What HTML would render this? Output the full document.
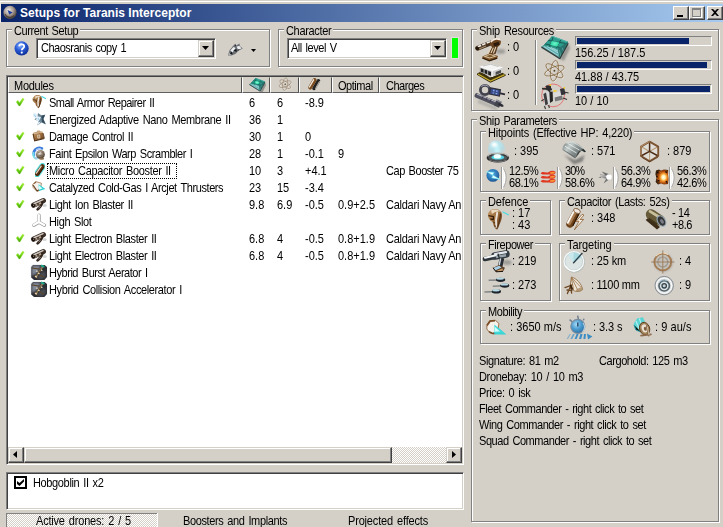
<!DOCTYPE html>
<html><head><meta charset="utf-8"><title>Setups for Taranis Interceptor</title>
<style>
html,body{margin:0;padding:0;}
body{width:723px;height:527px;overflow:hidden;background:#d4d0c8;position:relative;font-family:"Liberation Sans",sans-serif;font-size:11px;color:#000;}
div,svg{position:absolute;box-sizing:content-box;}
.t{white-space:nowrap;line-height:14px;height:14px;font-size:11px;transform:scaleY(1.13);transform-origin:0 10.8px;}
.gb{border:1px solid #808080;box-shadow:1px 1px 0 #fff, inset 1px 1px 0 #fff;}
.gl{background:#d4d0c8;padding:0 2px;line-height:14px;height:14px;white-space:nowrap;}
.gl span{display:inline-block;position:static;transform:scaleY(1.13);transform-origin:0 10.8px;}
.sunk{border:1px solid;border-color:#808080 #fff #fff #808080;box-shadow:inset 1px 1px 0 #404040, inset -1px -1px 0 #d4d0c8;background:#fff;}
.btn{background:#d4d0c8;border:1px solid;border-color:#fff #404040 #404040 #fff;box-shadow:inset -1px -1px 0 #808080, inset 1px 1px 0 #d4d0c8;}
.btn2{background:#d4d0c8;border:1px solid;border-color:#d4d0c8 #404040 #404040 #d4d0c8;box-shadow:inset -1px -1px 0 #808080, inset 1px 1px 0 #fff;}
.hd{background:#d4d0c8;border:1px solid;border-color:#d4d0c8 #505050 #606060 #fff;top:77px;height:14px;}
.dither{background-image:conic-gradient(#fff 25%,#d4d0c8 0 50%,#fff 0 75%,#d4d0c8 0);background-size:2px 2px;}
.pb{border:1px solid;border-color:#808080 #fff #fff #808080;height:8px;}
.pf{background:#0a246a;left:1px;top:1px;height:6px;}
.rb{width:1px;background:#808080;box-shadow:1px 0 0 #fff, 2px 0 0 #b8b4ac;}
</style></head><body>

<svg width="0" height="0" style="left:0;top:0"><defs>
<filter id="b3" x="-30%" y="-30%" width="160%" height="160%"><feGaussianBlur stdDeviation=".3"/></filter>
<filter id="b5" x="-30%" y="-30%" width="160%" height="160%"><feGaussianBlur stdDeviation=".5"/></filter>
<filter id="b8" x="-40%" y="-40%" width="180%" height="180%"><feGaussianBlur stdDeviation=".8"/></filter>
<filter id="b12" x="-50%" y="-50%" width="200%" height="200%"><feGaussianBlur stdDeviation="1.3"/></filter>
<linearGradient id="gchk" x1="0" y1="0" x2="0" y2="1"><stop offset="0" stop-color="#a4ee30"/><stop offset=".55" stop-color="#6cd014"/><stop offset="1" stop-color="#3e9a0c"/></linearGradient>
<linearGradient id="gbrown" x1="0" y1="0" x2="1" y2="1"><stop offset="0" stop-color="#c8a070"/><stop offset=".5" stop-color="#9a6a3a"/><stop offset="1" stop-color="#5a3414"/></linearGradient>
<linearGradient id="gmetal" x1="0" y1="0" x2="1" y2=".6"><stop offset="0" stop-color="#6a7272"/><stop offset=".35" stop-color="#c4cccc"/><stop offset=".6" stop-color="#8a9292"/><stop offset="1" stop-color="#5a6262"/></linearGradient>
<radialGradient id="ghelp" cx=".4" cy=".3" r=".75"><stop offset="0" stop-color="#8ab4ff"/><stop offset=".45" stop-color="#2a5cd8"/><stop offset="1" stop-color="#0a2a90"/></radialGradient>
<radialGradient id="gshield" cx=".42" cy=".3" r=".7"><stop offset="0" stop-color="#ffffff"/><stop offset=".25" stop-color="#b4ecf8"/><stop offset=".7" stop-color="#a8dcec" stop-opacity=".75"/><stop offset="1" stop-color="#a8dcec" stop-opacity="0"/></radialGradient>
<radialGradient id="gex" cx=".62" cy=".52" r=".6"><stop offset="0" stop-color="#ffffff"/><stop offset=".22" stop-color="#fff0b0"/><stop offset=".4" stop-color="#f8a030"/><stop offset=".65" stop-color="#b04c10"/><stop offset="1" stop-color="#38200c"/></radialGradient>
<radialGradient id="gem" cx=".45" cy=".4" r=".65"><stop offset="0" stop-color="#58a8e0"/><stop offset=".6" stop-color="#2c78b8"/><stop offset="1" stop-color="#1c4c88"/></radialGradient>
<radialGradient id="gsph" cx=".4" cy=".35" r=".7"><stop offset="0" stop-color="#f4f0ec"/><stop offset=".45" stop-color="#9a8c7c"/><stop offset="1" stop-color="#3a2c20"/></radialGradient>
<radialGradient id="galign" cx=".4" cy=".35" r=".7"><stop offset="0" stop-color="#a8dcf8"/><stop offset=".5" stop-color="#4c9cd0"/><stop offset="1" stop-color="#2c6ca0"/></radialGradient>
<radialGradient id="gtitle" cx=".4" cy=".35" r=".7"><stop offset="0" stop-color="#f0ece8"/><stop offset=".5" stop-color="#a89c94"/><stop offset="1" stop-color="#40362e"/></radialGradient>
</defs></svg>
<div style="left:0;top:0;width:723px;height:1px;background:#d4d0c8"></div>
<div style="left:0;top:1px;width:723px;height:1px;background:#fff"></div>
<div style="left:0;top:2px;width:1px;height:21px;background:#ebe9e2"></div>
<div style="left:1px;top:4px;width:722px;height:18px;background:linear-gradient(90deg,#0a246a,#a6caf0)"></div>
<svg style="left:3px;top:5px;overflow:visible" width="15" height="15" viewBox="0 0 15 15" ><circle cx="7" cy="7.4" r="6.6" fill="url(#gtitle)"/><path d="M4.6 5 L9.6 7.4 L6.2 9.6Z" fill="#1c3c9c"/><path d="M2 9 A5.4 5.4 0 0 0 11 10.6" stroke="#2c241c" stroke-width="1.2" fill="none" opacity=".6"/></svg>
<div class="t" style="-webkit-text-stroke:0;transform:none;left:20px;top:6px;color:#fff;font-weight:bold;font-size:12px;letter-spacing:0.03px" id="title">Setups for Taranis Interceptor</div>
<div class="btn" style="left:673px;top:6px;width:14px;height:12px"><div style="left:3px;top:8px;width:6px;height:2px;background:#000"></div></div>
<div class="btn" style="left:689px;top:6px;width:14px;height:12px"><div style="left:2px;top:1px;width:7px;height:6px;border:1px solid #808080;border-top-width:2px;box-shadow:1px 1px 0 #fff"></div></div>
<div class="btn" style="left:707px;top:6px;width:14px;height:12px"><svg style="left:3px;top:2px" width="8" height="7" viewBox="0 0 8 7"><path d="M0 0h2l2 2 2-2h2L5 3.5 8 7H6L4 5 2 7H0l3-3.5z" fill="#000"/></svg></div>
<div class="gb" style="left:6px;top:29px;width:262px;height:36px"></div><div class="gl" style="left:12px;top:24px;letter-spacing:-0.414px;word-spacing:1.2px;"><span>Current Setup</span></div>
<svg style="left:14px;top:41px;overflow:visible" width="15" height="15" viewBox="0 0 15 15" ><circle cx="7.6" cy="7.4" r="7.1" fill="url(#ghelp)"/><path d="M5.2 5.2 C5.2 2.6 10.2 2.6 10.2 5.4 C10.2 7.2 7.8 7.2 7.8 9.2" stroke="#fff" stroke-width="1.8" fill="none"/><circle cx="7.8" cy="11.6" r="1.1" fill="#fff"/></svg>
<div class="sunk" style="left:36px;top:38px;width:178px;height:19px"></div>
<div class="t" style="left:41px;top:41px;letter-spacing:-0.500px;word-spacing:1.2px;">Chaosranis copy 1</div>
<div class="btn2" style="left:198px;top:40px;width:14px;height:15px"><svg style="left:3px;top:5px" width="7" height="4"><path d="M0 0h7L3.5 4z" fill="#000"/></svg></div>
<svg style="left:227px;top:42px;overflow:visible" width="17" height="15" viewBox="0 0 17 15" ><path d="M1 13.6 L2.4 8.4 L6 4 L8.4 1.6 L9 3.6 L12.6 1.6 L12.8 4 L15.8 6.6 L11.4 8.8 L8.4 12 L4.4 13.4Z" fill="#6c7074" filter="url(#b3)"/><path d="M3.4 8.6 L6.4 5 L8.6 6 L5.4 10.4Z M9.6 4.4 L12.4 4 L14.6 6.4 L11 7.4Z M1.6 12.4 L3 10.4 L4 12.6Z" fill="#eef0f2"/><path d="M2.4 11.6 L5 9.6 L5.6 12.6Z M6.4 8.4 L9.4 6.8 L9.8 10Z M7.6 3.4 L8.6 2.6 L8.8 4.6Z M10.6 8 L12.6 7 L11 9Z" fill="#14181c"/></svg>
<svg style="left:251px;top:49px" width="5" height="3"><path d="M0 0h5L2.5 3z" fill="#000"/></svg>
<div class="gb" style="left:278px;top:29px;width:183px;height:36px"></div><div class="gl" style="left:284px;top:24px;letter-spacing:-0.322px;"><span>Character</span></div>
<div class="sunk" style="left:287px;top:38px;width:158px;height:19px"></div>
<div class="t" style="left:291px;top:41px;letter-spacing:-0.472px;word-spacing:1.2px;">All level V</div>
<div class="btn2" style="left:430px;top:40px;width:14px;height:15px"><svg style="left:3px;top:5px" width="7" height="4"><path d="M0 0h7L3.5 4z" fill="#000"/></svg></div>
<div style="left:452px;top:38px;width:6px;height:20px;background:#00ff00;box-shadow:0 0 0 1px rgba(255,255,255,.35)"></div>
<div class="sunk" style="left:6px;top:75px;width:456px;height:388px"></div>
<div style="left:8px;top:77px;width:454px;height:16px;overflow:hidden">
<div class="hd" style="left:0px;top:0;width:232px"></div>
<div class="hd" style="left:234px;top:0;width:26px"></div>
<div class="hd" style="left:262px;top:0;width:27px"></div>
<div class="hd" style="left:291px;top:0;width:31px"></div>
<div class="hd" style="left:324px;top:0;width:45px"></div>
<div class="hd" style="left:371px;top:0;width:91px"></div>
</div>
<div class="t" style="left:14px;top:79px;letter-spacing:-0.282px;">Modules</div>
<div class="t" style="left:338px;top:79px;letter-spacing:-0.471px;">Optimal</div>
<div class="t" style="left:386px;top:79px;letter-spacing:-0.482px;">Charges</div>
<svg style="left:249px;top:77.5px;overflow:visible" width="16.5" height="14.7" viewBox="0 0 28 25"><path d="M18.9 22.6 L27.2 7.5 L29 12 L22.8 25Z" fill="#606060" opacity=".55" filter="url(#b8)"/><path d="M11.2 .1 L26.9 5.8 L27.2 7.5 L18.9 22.6 L.4 11 L2.7 9.2Z" fill="#2c6c6a"/><path d="M2.7 9.2 L.4 11 L18.9 22.6 L16.9 12.7Z" fill="#5aaeb0"/><path d="M3 10.6 L17 19.6 M6 10.4 L17.4 17 M10 11.4 L17 15.2" stroke="#d4f0f0" stroke-width=".9" opacity=".7"/><path d="M1 11.6 L18.6 22" stroke="#6c8484" stroke-width="1.6" opacity=".8"/><path d="M16.9 12.7 L18.9 22.6 L27.2 7.5 L26.9 5.8Z" fill="#2a7470"/><path d="M18.4 14 L20 21 M21 11.6 L23 16" stroke="#7cc4c0" stroke-width=".8" opacity=".6"/><clipPath id="cpt"><path d="M11.2 .1 L26.9 5.8 L16.9 12.7 L2.7 9.2Z"/></clipPath><path d="M11.2 .1 L26.9 5.8 L16.9 12.7 L2.7 9.2Z" fill="#2c9c8c"/><g clip-path="url(#cpt)" stroke="#184c48" stroke-width="1" opacity=".85"><path d="M4 3.8 L25 7.6 M22 12.2 L3 7.6 M20.6 2.4 L13.8 15 M7.6 13.2 L12.4 .6"/></g><path d="M10.7 5 L18.4 6.4 L16.1 10.7 L9.2 9Z" fill="#2cdca4"/><ellipse cx="13.8" cy="7.6" rx="2.6" ry="1.6" fill="#7cf4d0" filter="url(#b8)"/><path d="M11.2 .3 L26.6 5.9" stroke="#5cc4b8" stroke-width=".8"/><path d="M.4 11 L18.9 22.6 L27.2 7.5" stroke="#303a38" stroke-width="1.1" fill="none"/></svg>
<svg style="left:278px;top:77px;overflow:visible" width="15" height="14" viewBox="0 0 15 14" ><ellipse cx="7.8" cy="7.8" rx="2.5" ry="6.4" transform="rotate(8 7.8 7.8)" fill="none" stroke="#f4f0e8" stroke-width="0.6" opacity=".75"/><ellipse cx="7.8" cy="7.8" rx="2.5" ry="6.4" transform="rotate(68 7.8 7.8)" fill="none" stroke="#f4f0e8" stroke-width="0.6" opacity=".75"/><ellipse cx="7.8" cy="7.8" rx="2.5" ry="6.4" transform="rotate(-52 7.8 7.8)" fill="none" stroke="#f4f0e8" stroke-width="0.6" opacity=".75"/><ellipse cx="7.2" cy="7.2" rx="2.5" ry="6.4" transform="rotate(8 7.2 7.2)" fill="none" stroke="#94806a" stroke-width="0.6"/><ellipse cx="7.2" cy="7.2" rx="2.5" ry="6.4" transform="rotate(68 7.2 7.2)" fill="none" stroke="#94806a" stroke-width="0.6"/><ellipse cx="7.2" cy="7.2" rx="2.5" ry="6.4" transform="rotate(-52 7.2 7.2)" fill="none" stroke="#94806a" stroke-width="0.6"/><circle cx="7.2" cy="7.2" r="0.78" fill="#5a4428"/></svg>
<svg style="left:307px;top:78px;overflow:visible" width="14" height="13" viewBox="0 0 14 13" ><path d="M9.4 2 L5 9.6" stroke="#242424" stroke-width="3.6" stroke-linecap="round" transform="translate(2 .8)"/><path d="M7.6 2 L3.2 9.6" stroke="#7a4c20" stroke-width="4" stroke-linecap="round"/><path d="M6.6 1.8 L2.4 9" stroke="#f4ece0" stroke-width="1.3" stroke-linecap="round"/><path d="M12.4 3.6 L8.6 10.4" stroke="#dcd4c8" stroke-width=".9" stroke-linecap="round"/></svg>
<svg style="left:16px;top:97px;margin-top:1px;overflow:visible" width="9" height="8" viewBox="0 0 9 8"><path d="M.1 3.9 L1.9 2.3 L3.5 4.5 L6.7 .1 L8.3 1 L4 8 L3 8Z" fill="url(#gchk)" stroke="#a4e848" stroke-width=".5" stroke-opacity=".55"/></svg>
<svg style="left:32px;top:95px;margin-top:0px;overflow:visible" width="16" height="16" viewBox="0 0 16 16"><path d="M2 1.400C4-.6 8-.4 9.400 1.800 10.800 4.600 8.800 9 6.800 13.300 5.200 12.600 3.800 10.400 3.300 8.200 1.200 7.200 0 5 .6 3.200Z" fill="url(#gbrown)"/><path d="M3 1.600 C5 .4 7.600 .6 8.800 2.200 C6.600 1.800 4.600 2.600 3.600 4Z" fill="#f4e8d4" opacity=".85"/><path d="M6.800 2.400 C6 5 5.800 8 6.200 11.600" stroke="#fff" stroke-width="1.500" opacity=".85" fill="none" filter="url(#b3)"/><path d="M1 4.600 L4.400 5.400 L4.400 7.200 M8.800 3 C9 6 8 9 7 12" stroke="#4a2a10" stroke-width=".9" fill="none" opacity=".85"/><path d="M9.800 1.600 L13.600 3.600" stroke="#40d8e0" stroke-width="1.100" stroke-linecap="round"/></svg>
<div class="t" style="left:49px;top:96px;letter-spacing:-0.552px;word-spacing:1.2px;">Small Armor Repairer II</div>
<div class="t" style="left:249px;top:96px;">6</div>
<div class="t" style="left:277px;top:96px;">6</div>
<div class="t" style="left:305px;top:96px;">-8.9</div>
<svg style="left:32px;top:112px;margin-top:0px;overflow:visible" width="16" height="16" viewBox="0 0 16 16"><path d="M6 1 L9.6 3.4 L13.4 2.6 L11.6 7 L14 12.4 L9.6 10.4 L5.4 13.4 L6.4 9.2 L2.4 7.2 L5.4 5Z" fill="#6c8898" filter="url(#b3)"/><path d="M9.4 3.6 L13 3 L11.2 7 L13.4 12 L10 10.2 Z" fill="#2c4050" opacity=".85"/><path d="M1.6 .6 L5 2 L4.4 6 L1.2 5Z M5 4 L9 5.2 L6.6 9.6 L4 8Z M5.6 10.4 L8.6 9.8 L6.4 13Z" fill="#e0f0fa" filter="url(#b3)"/><path d="M2 2.6 L4 5 M6 6 L7 8" stroke="#8cc4e4" stroke-width=".9"/></svg>
<div class="t" style="left:49px;top:113px;letter-spacing:-0.347px;word-spacing:1.2px;">Energized Adaptive Nano Membrane II</div>
<div class="t" style="left:249px;top:113px;">36</div>
<div class="t" style="left:277px;top:113px;">1</div>
<svg style="left:16px;top:131px;margin-top:1px;overflow:visible" width="9" height="8" viewBox="0 0 9 8"><path d="M.1 3.9 L1.9 2.3 L3.5 4.5 L6.7 .1 L8.3 1 L4 8 L3 8Z" fill="url(#gchk)" stroke="#a4e848" stroke-width=".5" stroke-opacity=".55"/></svg>
<svg style="left:32px;top:129px;margin-top:0px;overflow:visible" width="16" height="16" viewBox="0 0 16 16"><path d="M.6 5 L10.8 3.4 L12.2 9.6 L2.2 12Z" fill="url(#gbrown)"/><path d="M1.6 3.6 L4.6 2.8 L5.4 1.6 L8 1.4 L8.6 2.4 L10.2 2.2 L10.8 3.4 L.6 5Z" fill="#c8a47c"/><path d="M.6 5 L2.2 12 L3 11.8 L1.6 4.8Z" fill="#5a3414"/><rect x="5.6" y="6" width="2.2" height="3" fill="#b08c64" stroke="#e4d4bc" stroke-width=".7" transform="rotate(-8 7 7.4)"/><path d="M2.2 12 L12.2 9.600" stroke="#3a200c" stroke-width=".9"/><path d="M11 4 L12.4 9.400" stroke="#4a2a10" stroke-width=".8"/></svg>
<div class="t" style="left:49px;top:130px;letter-spacing:-0.450px;word-spacing:1.2px;">Damage Control II</div>
<div class="t" style="left:249px;top:130px;">30</div>
<div class="t" style="left:277px;top:130px;">1</div>
<div class="t" style="left:305px;top:130px;">0</div>
<svg style="left:16px;top:148px;margin-top:1px;overflow:visible" width="9" height="8" viewBox="0 0 9 8"><path d="M.1 3.9 L1.9 2.3 L3.5 4.5 L6.7 .1 L8.3 1 L4 8 L3 8Z" fill="url(#gchk)" stroke="#a4e848" stroke-width=".5" stroke-opacity=".55"/></svg>
<svg style="left:32px;top:146px;margin-top:0px;overflow:visible" width="16" height="16" viewBox="0 0 16 16"><path d="M2 9 C.6 4 5 .6 10 2.4" stroke="#3c7cdc" stroke-width="2.6" fill="none" stroke-linecap="round" filter="url(#b5)"/><path d="M1.6 7 C1 9.600 2 11.600 4 12.600" stroke="#74dcec" stroke-width="2" fill="none" stroke-linecap="round" filter="url(#b5)"/><ellipse cx="5" cy="12" rx="3" ry="1.300" fill="#a8cce0" filter="url(#b5)"/><path d="M4 3.600 C6 2.400 8 2.600 9 3" stroke="#c4dcf8" stroke-width="1" fill="none"/><circle cx="8.400" cy="8.400" r="4.400" fill="url(#gsph)"/><path d="M5.400 7 L8 6 M7 10 L10 9 M9 5.600 L11 7.600" stroke="#6c5844" stroke-width=".9" opacity=".7"/><ellipse cx="9.600" cy="12.800" rx="2.600" ry="1" fill="#8a6a4a"/></svg>
<div class="t" style="left:49px;top:147px;letter-spacing:-0.440px;word-spacing:1.2px;">Faint Epsilon Warp Scrambler I</div>
<div class="t" style="left:249px;top:147px;">28</div>
<div class="t" style="left:277px;top:147px;">1</div>
<div class="t" style="left:305px;top:147px;">-0.1</div>
<div class="t" style="left:338px;top:147px;">9</div>
<svg style="left:16px;top:165px;margin-top:1px;overflow:visible" width="9" height="8" viewBox="0 0 9 8"><path d="M.1 3.9 L1.9 2.3 L3.5 4.5 L6.7 .1 L8.3 1 L4 8 L3 8Z" fill="url(#gchk)" stroke="#a4e848" stroke-width=".5" stroke-opacity=".55"/></svg>
<svg style="left:32px;top:163px;margin-top:0px;overflow:visible" width="16" height="16" viewBox="0 0 16 16"><path d="M10.6 3.2 L5 11.2" stroke="#5ce4e4" stroke-width="6.6" stroke-linecap="round" filter="url(#b5)"/><path d="M10.4 3.4 L5.2 11" stroke="#5a3010" stroke-width="4.4" stroke-linecap="round"/><path d="M9.2 3.2 L4.4 10.2" stroke="#f4ece4" stroke-width="1.2" stroke-linecap="round" opacity=".9"/><path d="M11.6 4.4 L6.6 11.8" stroke="#2c1404" stroke-width="1" stroke-linecap="round" opacity=".8"/></svg>
<div class="t" style="left:49px;top:164px;letter-spacing:-0.344px;word-spacing:1.2px;">Micro Capacitor Booster II</div>
<div class="t" style="left:249px;top:164px;">10</div>
<div class="t" style="left:277px;top:164px;">3</div>
<div class="t" style="left:305px;top:164px;">+4.1</div>
<div class="t" style="left:386px;top:164px;letter-spacing:-0.459px;word-spacing:1.2px;width:76px;overflow:hidden;">Cap Booster 75</div>
<svg style="left:16px;top:182px;margin-top:1px;overflow:visible" width="9" height="8" viewBox="0 0 9 8"><path d="M.1 3.9 L1.9 2.3 L3.5 4.5 L6.7 .1 L8.3 1 L4 8 L3 8Z" fill="url(#gchk)" stroke="#a4e848" stroke-width=".5" stroke-opacity=".55"/></svg>
<svg style="left:32px;top:180px;margin-top:0px;overflow:visible" width="16" height="16" viewBox="0 0 16 16"><path d="M.6 4.4 L3.8 1.6 L9.4 3.2 L8.6 9.6 L5.2 11.6 L1.2 7.6Z" fill="#f4f0ec" stroke="#a07850" stroke-width=".8"/><path d="M1 5 L5 10.8 L8 9.6" stroke="#6a4020" stroke-width="1.1" fill="none"/><path d="M2 3.6 L4 2" stroke="#8a5c34" stroke-width="1.1"/><path d="M6.6 4.2 L13.4 9 L7 11Z" fill="#2cd0d0" filter="url(#b3)"/><path d="M6.6 5 L10.6 8.4 L7 9.8Z" fill="#d4fcfc"/></svg>
<div class="t" style="left:49px;top:181px;letter-spacing:-0.406px;word-spacing:1.2px;">Catalyzed Cold-Gas I Arcjet Thrusters</div>
<div class="t" style="left:249px;top:181px;">23</div>
<div class="t" style="left:277px;top:181px;">15</div>
<div class="t" style="left:305px;top:181px;">-3.4</div>
<svg style="left:16px;top:199px;margin-top:1px;overflow:visible" width="9" height="8" viewBox="0 0 9 8"><path d="M.1 3.9 L1.9 2.3 L3.5 4.5 L6.7 .1 L8.3 1 L4 8 L3 8Z" fill="url(#gchk)" stroke="#a4e848" stroke-width=".5" stroke-opacity=".55"/></svg>
<svg style="left:31px;top:197px;margin-top:0px;overflow:visible" width="16" height="16" viewBox="0 0 16 16"><ellipse cx="13.6" cy="8.6" rx="2.2" ry="1.5" fill="#888" opacity=".35" filter="url(#b5)"/><path d="M2.600 8.200 L12.400 3.600" stroke="#3c3028" stroke-width="5.200" stroke-linecap="round"/><path d="M11 5 C11.600 8 9 10 6.600 12.400" stroke="#30241c" stroke-width="2.600" stroke-linecap="round" fill="none"/><path d="M3 6.800 L12 2.600" stroke="#d0c8c0" stroke-width="1.500" stroke-linecap="round"/><path d="M4.600 8.400 L6.400 7.600 M8 6.800 L10 5.800" stroke="#b4a08c" stroke-width="2"/><path d="M4 9.600 L9 7.400" stroke="#7c6c5c" stroke-width="1"/><path d="M9.600 9 L7.400 11.400" stroke="#948880" stroke-width="1"/><circle cx="2.400" cy="8.400" r="1.600" fill="#120c06"/><circle cx="2.600" cy="8.200" r=".7" fill="#8c8078"/></svg>
<div class="t" style="left:49px;top:198px;letter-spacing:-0.413px;word-spacing:1.2px;">Light Ion Blaster II</div>
<div class="t" style="left:249px;top:198px;">9.8</div>
<div class="t" style="left:277px;top:198px;">6.9</div>
<div class="t" style="left:305px;top:198px;">-0.5</div>
<div class="t" style="left:338px;top:198px;">0.9+2.5</div>
<div class="t" style="left:386px;top:198px;letter-spacing:-0.250px;width:76px;overflow:hidden;">Caldari Navy An</div>
<svg style="left:32px;top:214px;margin-top:0px;overflow:visible" width="16" height="16" viewBox="0 0 16 16"><g stroke="#8c8c8c" stroke-width="3.4" fill="none" stroke-linecap="round" opacity=".85"><path d="M7 1.2 V8.2 L1.8 11.2 M7 8.2 L12.4 11.2"/></g><g stroke="#fff" stroke-width="2.2" fill="none" stroke-linecap="round"><path d="M6.8 1 V8 L1.6 11 M6.8 8 L12.2 11"/></g></svg>
<div class="t" style="left:49px;top:215px;letter-spacing:-0.370px;word-spacing:1.2px;">High Slot</div>
<svg style="left:16px;top:233px;margin-top:1px;overflow:visible" width="9" height="8" viewBox="0 0 9 8"><path d="M.1 3.9 L1.9 2.3 L3.5 4.5 L6.7 .1 L8.3 1 L4 8 L3 8Z" fill="url(#gchk)" stroke="#a4e848" stroke-width=".5" stroke-opacity=".55"/></svg>
<svg style="left:31px;top:231px;margin-top:0px;overflow:visible" width="16" height="16" viewBox="0 0 16 16"><ellipse cx="13.6" cy="8.6" rx="2.2" ry="1.5" fill="#888" opacity=".35" filter="url(#b5)"/><path d="M2.600 8.200 L12.400 3.600" stroke="#3c3028" stroke-width="5.200" stroke-linecap="round"/><path d="M11 5 C11.600 8 9 10 6.600 12.400" stroke="#30241c" stroke-width="2.600" stroke-linecap="round" fill="none"/><path d="M3 6.800 L12 2.600" stroke="#d0c8c0" stroke-width="1.500" stroke-linecap="round"/><path d="M4.600 8.400 L6.400 7.600 M8 6.800 L10 5.800" stroke="#b4a08c" stroke-width="2"/><path d="M4 9.600 L9 7.400" stroke="#7c6c5c" stroke-width="1"/><path d="M9.600 9 L7.400 11.400" stroke="#948880" stroke-width="1"/><circle cx="2.400" cy="8.400" r="1.600" fill="#120c06"/><circle cx="2.600" cy="8.200" r=".7" fill="#8c8078"/></svg>
<div class="t" style="left:49px;top:232px;letter-spacing:-0.393px;word-spacing:1.2px;">Light Electron Blaster II</div>
<div class="t" style="left:249px;top:232px;">6.8</div>
<div class="t" style="left:277px;top:232px;">4</div>
<div class="t" style="left:305px;top:232px;">-0.5</div>
<div class="t" style="left:338px;top:232px;">0.8+1.9</div>
<div class="t" style="left:386px;top:232px;letter-spacing:-0.250px;width:76px;overflow:hidden;">Caldari Navy An</div>
<svg style="left:16px;top:250px;margin-top:1px;overflow:visible" width="9" height="8" viewBox="0 0 9 8"><path d="M.1 3.9 L1.9 2.3 L3.5 4.5 L6.7 .1 L8.3 1 L4 8 L3 8Z" fill="url(#gchk)" stroke="#a4e848" stroke-width=".5" stroke-opacity=".55"/></svg>
<svg style="left:31px;top:248px;margin-top:0px;overflow:visible" width="16" height="16" viewBox="0 0 16 16"><ellipse cx="13.6" cy="8.6" rx="2.2" ry="1.5" fill="#888" opacity=".35" filter="url(#b5)"/><path d="M2.600 8.200 L12.400 3.600" stroke="#3c3028" stroke-width="5.200" stroke-linecap="round"/><path d="M11 5 C11.600 8 9 10 6.600 12.400" stroke="#30241c" stroke-width="2.600" stroke-linecap="round" fill="none"/><path d="M3 6.800 L12 2.600" stroke="#d0c8c0" stroke-width="1.500" stroke-linecap="round"/><path d="M4.600 8.400 L6.400 7.600 M8 6.800 L10 5.800" stroke="#b4a08c" stroke-width="2"/><path d="M4 9.600 L9 7.400" stroke="#7c6c5c" stroke-width="1"/><path d="M9.600 9 L7.400 11.400" stroke="#948880" stroke-width="1"/><circle cx="2.400" cy="8.400" r="1.600" fill="#120c06"/><circle cx="2.600" cy="8.200" r=".7" fill="#8c8078"/></svg>
<div class="t" style="left:49px;top:249px;letter-spacing:-0.393px;word-spacing:1.2px;">Light Electron Blaster II</div>
<div class="t" style="left:249px;top:249px;">6.8</div>
<div class="t" style="left:277px;top:249px;">4</div>
<div class="t" style="left:305px;top:249px;">-0.5</div>
<div class="t" style="left:338px;top:249px;">0.8+1.9</div>
<div class="t" style="left:386px;top:249px;letter-spacing:-0.250px;width:76px;overflow:hidden;">Caldari Navy An</div>
<svg style="left:31px;top:265px;margin-top:0px;overflow:visible" width="16" height="16" viewBox="0 0 16 16"><path d="M2 0 H13.600 L16 2 V12 L13.400 15 H3 L.2 12.400 V2Z" fill="#2c2e34"/><path d="M1.600 .6 H10 L6 8 L.8 11 V2Z" fill="#98a0b0" opacity=".8" filter="url(#b8)"/><path d="M8 9 L14 6 L15 11 L12 14 L6 14Z" fill="#50545c" opacity=".8" filter="url(#b8)"/><path d="M12 1 L4.600 12.600" stroke="#a08458" stroke-width="1.500" opacity=".9"/><path d="M1 3 L8 4 M10 4.400 L7 10 M3 10.600 L7 13.400 M9 10 L13 12" stroke="#5c4428" stroke-width="1.100"/><path d="M4 11 L6 12.200 M7 8 L8.600 8.800 M10 5 L11.400 5.600 M5 6 L6.600 6.400" stroke="#e8dcc0" stroke-width="1.200"/><path d="M10 .4 L13.400 1.800" stroke="#1ca888" stroke-width="1.800"/></svg>
<div class="t" style="left:49px;top:266px;letter-spacing:-0.461px;word-spacing:1.2px;">Hybrid Burst Aerator I</div>
<svg style="left:31px;top:282px;margin-top:0px;overflow:visible" width="16" height="16" viewBox="0 0 16 16"><path d="M2 0 H13.600 L16 2 V12 L13.400 15 H3 L.2 12.400 V2Z" fill="#2c2e34"/><path d="M1.600 .6 H10 L6 8 L.8 11 V2Z" fill="#98a0b0" opacity=".8" filter="url(#b8)"/><path d="M8 9 L14 6 L15 11 L12 14 L6 14Z" fill="#50545c" opacity=".8" filter="url(#b8)"/><path d="M12 1 L4.600 12.600" stroke="#a08458" stroke-width="1.500" opacity=".9"/><path d="M1 3 L8 4 M10 4.400 L7 10 M3 10.600 L7 13.400 M9 10 L13 12" stroke="#5c4428" stroke-width="1.100"/><path d="M4 11 L6 12.200 M7 8 L8.600 8.800 M10 5 L11.400 5.600 M5 6 L6.600 6.400" stroke="#e8dcc0" stroke-width="1.200"/><path d="M10 .4 L13.400 1.800" stroke="#1ca888" stroke-width="1.800"/></svg>
<div class="t" style="left:49px;top:283px;letter-spacing:-0.380px;word-spacing:1.2px;">Hybrid Collision Accelerator I</div>
<div style="left:47px;top:163px;width:128px;height:14px;border:1px dotted #000"></div>
<div class="dither" style="left:8px;top:447px;width:454px;height:16px"></div>
<div class="btn2" style="left:8px;top:447px;width:14px;height:14px"><svg style="left:4px;top:3px" width="4" height="7"><path d="M4 0v7L0 3.500z" fill="#000"/></svg></div>
<div class="btn2" style="left:24px;top:447px;width:366px;height:14px"></div>
<div class="btn2" style="left:446px;top:447px;width:14px;height:14px"><svg style="left:5px;top:3px" width="4" height="7"><path d="M0 0v7L4 3.500z" fill="#000"/></svg></div>
<div class="sunk" style="left:6px;top:472px;width:456px;height:36px"></div>
<div style="left:14px;top:476px;width:9px;height:9px;border:2px solid #000;background:#fff"><svg style="left:1px;top:1px" width="7" height="7"><path d="M0 2v3l2.5 2L7 2.5V0L2.500 4z" fill="#000"/></svg></div>
<div class="t" style="left:33px;top:476px;letter-spacing:-0.358px;word-spacing:1.2px;">Hobgoblin II x2</div>
<div class="dither" style="left:7px;top:514px;width:150px;height:13px"></div>
<div style="left:6px;top:513px;width:151px;height:1px;background:#808080"></div>
<div style="left:6px;top:513px;width:1px;height:14px;background:#808080"></div>
<div style="left:157px;top:513px;width:1px;height:14px;background:#fff"></div>
<div class="t" style="left:36px;top:514px;letter-spacing:-0.198px;word-spacing:1.2px;">Active drones: 2 / 5</div>
<div class="t" style="left:183px;top:514px;letter-spacing:-0.373px;word-spacing:1.2px;">Boosters and Implants</div>
<div class="t" style="left:348px;top:514px;letter-spacing:-0.172px;word-spacing:1.2px;">Projected effects</div>
<div class="gb" style="left:471px;top:29px;width:246px;height:80px"></div><div class="gl" style="left:477px;top:24px;letter-spacing:-0.275px;word-spacing:1.2px;"><span>Ship Resources</span></div>
<svg style="left:476px;top:38px;overflow:visible" width="30" height="23" viewBox="0 0 30 23" ><ellipse cx="24.6" cy="13.4" rx="4.6" ry="2.4" fill="#606060" opacity=".45" filter="url(#b8)"/><path d="M1.6 10.2 L16 4.4" stroke="#46301c" stroke-width="4.8" stroke-linecap="round"/><path d="M1.8 8.8 L15.6 3" stroke="#f0ece6" stroke-width="1.7" stroke-dasharray="3.6 1.2"/><path d="M3 11 L10 8" stroke="#a48c6c" stroke-width="1.3"/><circle cx="1.4" cy="10.4" r="1.7" fill="#20160c"/><ellipse cx="19.4" cy="5" rx="5.6" ry="4.4" transform="rotate(-18 19.4 5)" fill="#6c4420"/><path d="M14.8 4 C16.6 1 21 .2 24 1.8" stroke="#f4ece0" stroke-width="1.7" fill="none"/><path d="M17 5.4 L22.6 3.8 L23.6 6.8 L18.6 8.4Z" fill="#2c1a0c"/><path d="M12.4 16.6 L16 8 L22 8 L19.6 16Z" fill="#5c3c1e"/><path d="M15.6 8.8 L11.6 16.4 M19.8 9 L17.4 15.4 M17.4 9.6 L15 15" stroke="#e4d4b8" stroke-width="1.1"/><path d="M6.4 18.4 L14 15.2 L22 18 L21 20.8 L13.4 23 L6.4 20.6Z" fill="#7c5226"/><path d="M7.4 18.4 L14 16 L20.8 18.2 L13.6 20.4Z" fill="#d8c4a0"/><path d="M10 18.2 L14 16.8 L18 18.2 L13.8 19.6Z" fill="#7c5a30"/><path d="M6.4 20 L13.4 22.8 L21.2 20.2" stroke="#2c1c0c" stroke-width="1.3" fill="none"/></svg>
<div class="t" style="left:507px;top:40px;">: 0</div>
<svg style="left:476px;top:62px;overflow:visible" width="31" height="21" viewBox="0 0 31 21" ><path d="M1 11.6 L5 9.6 L14 15.6 L26 10.6 L29.6 12.6 L14.4 19.4Z" fill="#3c3210"/><path d="M1 11.6 L14.4 19.4 L29.6 12.6 L29.6 13.8 L14.4 20.8 L1 12.8Z" fill="#2c2406"/><path d="M2 12 L14.4 19 L28.6 12.6" stroke="#c4aa28" stroke-width="1.3" fill="none"/><path d="M3.6 4.6 L14.4 1.6 L26.4 5.2 L16 8.8Z" fill="#f4f4f4"/><path d="M3.6 4.6 L16 8.8 V15 L3.6 10Z" fill="#b4b4b4"/><path d="M16 8.8 L26.4 5.2 V10.8 L16 15Z" fill="#d0d0d0"/><path d="M4.8 6.2 L7.6 7.2 V10.8 L4.8 9.8Z M8.6 7.6 L11.2 8.6 V12.2 L8.6 11.2Z M12.2 9 L15 10 V13.8 L12.2 12.8Z" fill="#202020"/><path d="M19.6 10 L25 8 V10.8 L19.6 13Z" fill="#4c4c4c"/><path d="M16 9 V15" stroke="#fff" stroke-width="1"/><path d="M3.6 4.6 L16 8.8 L26.4 5.2" stroke="#fff" stroke-width="1" fill="none"/><path d="M7 4 L14.4 2.2 L22.6 4.6" stroke="#bcbcbc" stroke-width=".9" fill="none"/></svg>
<div class="t" style="left:507px;top:64px;">: 0</div>
<svg style="left:475px;top:84px;overflow:visible" width="31" height="24" viewBox="0 0 31 24" ><path d="M3 17 L22 25" stroke="#808080" stroke-width="3.4" opacity=".4" filter="url(#b8)"/><circle cx="10" cy="6" r="4.6" fill="none" stroke="#42424e" stroke-width="2.8"/><path d="M6.4 2.6 A4.8 4.8 0 0 1 13.6 2.8" stroke="#a8a8b8" stroke-width="1" fill="none"/><path d="M14.6 7 L30 10.4" stroke="#2c2c38" stroke-width="1.8"/><path d="M15.6 3.8 L25.4 5.8 L24.4 12 L14.6 10Z" fill="#3a4c8c" stroke="#30303c" stroke-width="1.2"/><path d="M18 5.8 h1.6 v1.4 h-1.6z M21 6.4 h1.6 v1.4 h-1.6z M17.6 8.4 h1.6 v1.2 h-1.6z M20.6 9 h1.6 v1.2 h-1.6z" fill="#88a8e4"/><path d="M2 11.6 L21 19.6" stroke="#50505e" stroke-width="4.8" stroke-linecap="round"/><path d="M2.4 10.2 L20.6 17.8" stroke="#b0b0c0" stroke-width="1.1" stroke-linecap="round"/><path d="M7 14.4 l1.2 -2.4 M11 16 l1.2 -2.4 M15 17.6 l1.2 -2.4" stroke="#2c2c38" stroke-width=".8"/><path d="M20.4 18.6 L25.4 20.8" stroke="#44444e" stroke-width="6.6"/><path d="M21 16 L26.2 18.2" stroke="#9c9cac" stroke-width="1.1"/><ellipse cx="25.8" cy="21" rx="1.4" ry="3" transform="rotate(-66 25.8 21)" fill="#2c2c34"/></svg>
<div class="t" style="left:507px;top:88px;">: 0</div>
<div style="left:535px;top:40px;width:1px;height:65px;background:#808080"></div><div style="left:536px;top:40px;width:1px;height:65px;background:#fff"></div>
<svg style="left:541px;top:36px;overflow:visible" width="28" height="25" viewBox="0 0 28 25" ><path d="M18.9 22.6 L27.2 7.5 L29 12 L22.8 25Z" fill="#606060" opacity=".55" filter="url(#b8)"/><path d="M11.2 .1 L26.9 5.8 L27.2 7.5 L18.9 22.6 L.4 11 L2.7 9.2Z" fill="#2c6c6a"/><path d="M2.7 9.2 L.4 11 L18.9 22.6 L16.9 12.7Z" fill="#5aaeb0"/><path d="M3 10.6 L17 19.6 M6 10.4 L17.4 17 M10 11.4 L17 15.2" stroke="#d4f0f0" stroke-width=".9" opacity=".7"/><path d="M1 11.6 L18.6 22" stroke="#6c8484" stroke-width="1.6" opacity=".8"/><path d="M16.9 12.7 L18.9 22.6 L27.2 7.5 L26.9 5.8Z" fill="#2a7470"/><path d="M18.4 14 L20 21 M21 11.6 L23 16" stroke="#7cc4c0" stroke-width=".8" opacity=".6"/><clipPath id="cpt"><path d="M11.2 .1 L26.9 5.8 L16.9 12.7 L2.7 9.2Z"/></clipPath><path d="M11.2 .1 L26.9 5.8 L16.9 12.7 L2.7 9.2Z" fill="#2c9c8c"/><g clip-path="url(#cpt)" stroke="#184c48" stroke-width="1" opacity=".85"><path d="M4 3.8 L25 7.6 M22 12.2 L3 7.6 M20.6 2.4 L13.8 15 M7.6 13.2 L12.4 .6"/></g><path d="M10.7 5 L18.4 6.4 L16.1 10.7 L9.2 9Z" fill="#2cdca4"/><ellipse cx="13.8" cy="7.6" rx="2.6" ry="1.6" fill="#7cf4d0" filter="url(#b8)"/><path d="M11.2 .3 L26.6 5.9" stroke="#5cc4b8" stroke-width=".8"/><path d="M.4 11 L18.9 22.6 L27.2 7.5" stroke="#303a38" stroke-width="1.1" fill="none"/></svg>
<div class="pb" style="left:575px;top:36px;width:135px"><div class="pf" style="width:112px"></div></div>
<div class="t" style="left:575px;top:46px;">156.25 / 187.5</div>
<svg style="left:544px;top:60px;overflow:visible" width="22" height="23" viewBox="0 0 22 23" ><ellipse cx="11.0" cy="11.4" rx="3.8" ry="10.4" transform="rotate(8 11.0 11.4)" fill="none" stroke="#f4f0e8" stroke-width="0.75" opacity=".75"/><ellipse cx="11.0" cy="11.4" rx="3.8" ry="10.4" transform="rotate(68 11.0 11.4)" fill="none" stroke="#f4f0e8" stroke-width="0.75" opacity=".75"/><ellipse cx="11.0" cy="11.4" rx="3.8" ry="10.4" transform="rotate(-52 11.0 11.4)" fill="none" stroke="#f4f0e8" stroke-width="0.75" opacity=".75"/><ellipse cx="10.4" cy="10.8" rx="3.8" ry="10.4" transform="rotate(8 10.4 10.8)" fill="none" stroke="#82643c" stroke-width="0.75"/><ellipse cx="10.4" cy="10.8" rx="3.8" ry="10.4" transform="rotate(68 10.4 10.8)" fill="none" stroke="#82643c" stroke-width="0.75"/><ellipse cx="10.4" cy="10.8" rx="3.8" ry="10.4" transform="rotate(-52 10.4 10.8)" fill="none" stroke="#82643c" stroke-width="0.75"/><circle cx="10.4" cy="10.8" r="0.9750000000000001" fill="#5a4428"/></svg>
<div class="pb" style="left:575px;top:60px;width:135px"><div class="pf" style="width:130px"></div></div>
<div class="t" style="left:575px;top:70px;">41.88 / 43.75</div>
<svg style="left:541px;top:84px;overflow:visible" width="28" height="24" viewBox="0 0 28 24" ><circle cx="12" cy="11.4" r="11.4" fill="none" stroke="#e46c6c" stroke-width=".9"/><path d="M1 4.6 L11 5.4 M5 2 L9 8" stroke="#303030" stroke-width="1.6"/><rect x="5.6" y="1.4" width="4.4" height="5" fill="#2c2c30"/><path d="M8.6 .6 L10 1.6" stroke="#f4d020" stroke-width="1.6"/><path d="M2.4 7 L9.6 8.6 L9 20 L3.6 22.6 L2.4 14Z" fill="#d8d8d8"/><path d="M2.4 10 L5 8.4 L7 20 L4.4 21.6Z" fill="#3c3c3c"/><path d="M8.4 8 L11.6 7.4 L12 17 L9 19Z" fill="#242424"/><path d="M12.4 7.2 L15.4 6.8" stroke="#f4d020" stroke-width="1.6"/><path d="M12.4 9 L20 7 L22.4 15 L13 18Z" fill="#dcdcdc"/><path d="M13.6 13.6 L21 11.4 L22 15.4 L14 17.6Z" fill="#787878"/><rect x="19.6" y="4.6" width="4.4" height="6.4" fill="#34343a" transform="rotate(-12 21 8)"/><path d="M22.6 3.6 L24 4.2" stroke="#f4d020" stroke-width="1.6"/><path d="M23 8 L27.6 9 M.4 17 L3 15.4 M22 14 L26 15.4" stroke="#303030" stroke-width="1.1"/><path d="M3.4 22 L4.6 25 M7.6 21 L8.4 24" stroke="#404040" stroke-width="1.2"/></svg>
<div class="pb" style="left:575px;top:84px;width:135px"><div class="pf" style="width:133px"></div></div>
<div class="t" style="left:575px;top:94px;">10 / 10</div>
<div class="gb" style="left:471px;top:119px;width:246px;height:401px"></div><div class="gl" style="left:477px;top:114px;letter-spacing:-0.341px;word-spacing:1.2px;"><span>Ship Parameters</span></div>
<div class="gb" style="left:480px;top:131px;width:228px;height:59px"></div><div class="gl" style="left:486px;top:126px;letter-spacing:-0.208px;word-spacing:1.2px;"><span>Hitpoints (Effective HP: 4,220)</span></div>
<svg style="left:486px;top:140px;overflow:visible" width="24" height="24" viewBox="0 0 24 24" ><path d="M3.400 16 C.6 9 2 .6 10 .6 C18 .6 20.600 9 19.600 16Z" fill="url(#gshield)" opacity=".8" filter="url(#b5)"/><ellipse cx="11.800" cy="17.800" rx="10.400" ry="4" fill="#50585c" stroke="#2c2c2c" stroke-width="1.500"/><ellipse cx="11.800" cy="17.400" rx="6.400" ry="2.200" fill="#50d4e4"/><path d="M8 17 C8 11 9 6 10 3 C12 6 14.600 11 15 17Z" fill="#c8f8ff" opacity=".75" filter="url(#b8)"/><ellipse cx="11.400" cy="16.400" rx="3.600" ry="2.200" fill="#f0ffff" filter="url(#b5)"/><path d="M1.600 16.400 A10.400 4 0 0 1 22 16.400" stroke="#b4b4b4" stroke-width="1.200" fill="none"/><path d="M3 20 A10.400 4 0 0 0 20.600 20" stroke="#808080" stroke-width=".9" fill="none"/><ellipse cx="8" cy="4.400" rx="2.600" ry="2.200" fill="#fff" filter="url(#b8)"/></svg>
<div class="t" style="left:514px;top:144px;">: 395</div>
<svg style="left:562px;top:141px;overflow:visible" width="25" height="24" viewBox="0 0 25 24" ><path d="M2 14 L13 19 L22.600 14 L20.600 20.400 L12 23.400Z" fill="#4c4c4c" opacity=".6" filter="url(#b12)"/><path d="M.1 8.750 C1 5 2.600 2.600 4.250 2.100 L10.900 .8 C15 2 19 5 21.300 7.500 L23.800 10.400 L22.500 11.200 C21 9.600 19.400 9.200 18 9.600 C16.600 10.400 16 11 15.500 11.700 L13 17.500Z" fill="url(#gmetal)"/><path d="M18 9.600 C19.400 9.200 21 9.600 22.500 11.200 L23.800 10.400 L21.300 8Z" fill="#262e2e"/><path d="M15.500 11.700 C16 11 16.600 10.400 18 9.600 L18.800 10.600 C17.600 11.400 17 12.400 16.400 13.600 L13 17.500Z" fill="#3c4444"/><path d="M3 5.200 L14.600 12 M5.600 2.400 L17.400 9" stroke="#eef4f4" stroke-width="1" opacity=".75"/><path d="M1.400 9 L12.600 16" stroke="#4c5454" stroke-width=".9" opacity=".7"/><path d="M4.250 2.100 L10.900 .8 L21.300 7.500" stroke="#dce4e4" stroke-width=".8" fill="none"/></svg>
<div class="t" style="left:591px;top:144px;">: 571</div>
<svg style="left:640px;top:141px;overflow:visible" width="20" height="22" viewBox="0 0 20 22" ><path d="M9.6 .6 L18.2 5.6 V15 L9.6 20.2 L1 15 V5.6Z" fill="#e8e8e4" opacity=".6"/><path d="M9.6 10.4 L1 5.6 M9.6 10.4 L18.2 5.6 M9.6 10.4 V20.2" stroke="#b89c78" stroke-width="1.1" fill="none"/><path d="M9.6 .6 V10.4 L1 15 M9.6 10.4 L18.2 15" stroke="#4c2c14" stroke-width="1.5" fill="none"/><path d="M9.6 .6 L18.2 5.6 V15 L9.6 20.2 L1 15 V5.6Z" fill="none" stroke="#7c5430" stroke-width="1.8" stroke-linejoin="round"/><path d="M9.6 .4 L1 5.4 V14" stroke="#c8a884" stroke-width=".7" fill="none"/><path d="M2 16.4 L9.6 21 L18 16.2" stroke="#503018" stroke-width=".9" fill="none" opacity=".7"/></svg>
<div class="t" style="left:667px;top:144px;">: 879</div>
<svg style="left:487px;top:169px;overflow:visible" width="14" height="14" viewBox="0 0 14 14" ><circle cx="5.9" cy="6.4" r="6.4" fill="url(#gem)"/><path d="M-.6 2.6 L7 3.6 L5.6 6 L13 10.4 L4.8 8.8 L6 6.4Z" fill="#f0ffff" stroke="#6ce8f4" stroke-width=".6"/></svg>
<svg style="left:500px;top:166px" width="7" height="24" viewBox="0 0 7 24"><path d="M1.5 1 V23" stroke="#9a9a9a" stroke-width="1"/><path d="M2.5 1 V23" stroke="#fff" stroke-width="1"/><path d="M3.2 2.6 C6.6 8 6.6 15 3.2 21.4Z" fill="#fff"/><path d="M3.6 2.8 C7 8 7 15 3.6 21.2" stroke="#a0a0a0" stroke-width=".8" fill="none"/></svg>
<div class="t" style="left:509px;top:164px;letter-spacing:-0.378px;">12.5%</div>
<div class="t" style="left:509px;top:176px;letter-spacing:-0.378px;">68.1%</div>
<svg style="left:540px;top:170px;overflow:visible" width="16" height="14" viewBox="0 0 16 14" ><path transform="translate(0 0)" d="M.6 3.4 C3 .2 5.6 3.6 8.4 2.2 C11 .6 13.6 .2 15.6 2 C15.6 4.4 12.4 5.4 9.4 4.6 C6.4 3.8 4 5.6 .6 3.4Z" fill="#e03820"/><path transform="translate(0 0)" d="M10 2.6 C12 1.6 14 1.6 15 2.4 C14.4 3.8 12 4.2 10 3.6Z" fill="#f89838"/><path transform="translate(0 4)" d="M.6 3.4 C3 .2 5.6 3.6 8.4 2.2 C11 .6 13.6 .2 15.6 2 C15.6 4.4 12.4 5.4 9.4 4.6 C6.4 3.8 4 5.6 .6 3.4Z" fill="#e03820"/><path transform="translate(0 4)" d="M10 2.6 C12 1.6 14 1.6 15 2.4 C14.4 3.8 12 4.2 10 3.6Z" fill="#f89838"/><path transform="translate(0 8)" d="M.6 3.4 C3 .2 5.6 3.6 8.4 2.2 C11 .6 13.6 .2 15.6 2 C15.6 4.4 12.4 5.4 9.4 4.6 C6.4 3.8 4 5.6 .6 3.4Z" fill="#e03820"/><path transform="translate(0 8)" d="M10 2.6 C12 1.6 14 1.6 15 2.4 C14.4 3.8 12 4.2 10 3.6Z" fill="#f89838"/></svg>
<svg style="left:556px;top:166px" width="7" height="24" viewBox="0 0 7 24"><path d="M1.5 1 V23" stroke="#9a9a9a" stroke-width="1"/><path d="M2.5 1 V23" stroke="#fff" stroke-width="1"/><path d="M3.2 2.6 C6.6 8 6.6 15 3.2 21.4Z" fill="#fff"/><path d="M3.6 2.8 C7 8 7 15 3.6 21.2" stroke="#a0a0a0" stroke-width=".8" fill="none"/></svg>
<div class="t" style="left:565px;top:164px;letter-spacing:-0.939px;">30%</div>
<div class="t" style="left:565px;top:176px;letter-spacing:-0.378px;">58.6%</div>
<svg style="left:598px;top:169px;overflow:visible" width="15" height="16" viewBox="0 0 15 16" ><path d="M.2 8.2 L11 6 L11.6 10Z" fill="#505050" filter="url(#b3)"/><path d="M3.6 2.6 L12 5.6 L9.4 8.4Z" fill="#6c6c6c" filter="url(#b3)"/><path d="M5.6 14.4 L9 8 L12.4 9.4Z" fill="#747474" filter="url(#b3)"/><path d="M2 5.6 L10 7" stroke="#909090" stroke-width="1" opacity=".8"/><path d="M3 8.2 L11 7.6" stroke="#e4e4e4" stroke-width="1"/><circle cx="11" cy="8" r="2.8" fill="#fff" filter="url(#b5)"/></svg>
<svg style="left:612px;top:166px" width="7" height="24" viewBox="0 0 7 24"><path d="M1.5 1 V23" stroke="#9a9a9a" stroke-width="1"/><path d="M2.5 1 V23" stroke="#fff" stroke-width="1"/><path d="M3.2 2.6 C6.6 8 6.6 15 3.2 21.4Z" fill="#fff"/><path d="M3.6 2.8 C7 8 7 15 3.6 21.2" stroke="#a0a0a0" stroke-width=".8" fill="none"/></svg>
<div class="t" style="left:621px;top:164px;letter-spacing:-0.378px;">56.3%</div>
<div class="t" style="left:621px;top:176px;letter-spacing:-0.378px;">64.9%</div>
<svg style="left:655px;top:169px;overflow:visible" width="14" height="16" viewBox="0 0 14 16" ><path d="M1 1.6 L4 .6 L6 1.6 L9 .4 L13.2 1 L13 6 L13.6 10 L13 15 L9 15.6 L6 14.6 L3 15.4 L.6 13 L1.4 9 L.4 5Z" fill="url(#gex)" filter="url(#b3)"/><path d="M2 3 l1.4 1 M3 11 l1.2 1.4 M10.6 2.4 l1 1.4 M11 12 l1 1.6 M1.4 7.4 l1.2 .6" stroke="#1c1008" stroke-width="1.2"/><path d="M4.6 2.6 l1 .8 M5 12.6 l1.4 .4 M2.6 9.6 l.8 .8" stroke="#e88020" stroke-width="1"/></svg>
<svg style="left:668px;top:166px" width="7" height="24" viewBox="0 0 7 24"><path d="M1.5 1 V23" stroke="#9a9a9a" stroke-width="1"/><path d="M2.5 1 V23" stroke="#fff" stroke-width="1"/><path d="M3.2 2.6 C6.6 8 6.6 15 3.2 21.4Z" fill="#fff"/><path d="M3.6 2.8 C7 8 7 15 3.6 21.2" stroke="#a0a0a0" stroke-width=".8" fill="none"/></svg>
<div class="t" style="left:677px;top:164px;letter-spacing:-0.378px;">56.3%</div>
<div class="t" style="left:677px;top:176px;letter-spacing:-0.378px;">42.6%</div>
<div class="gb" style="left:480px;top:200px;width:69px;height:33px"></div><div class="gl" style="left:486px;top:195px;letter-spacing:-0.096px;"><span>Defence</span></div>
<svg style="left:487px;top:208px;overflow:visible" width="22" height="23" viewBox="0 0 22 23" ><path d="M2.600 3 C5.600 -.2 12 .4 14.400 4.400 C16.400 8.400 13.600 14 10.400 21.600 C8 21 6.400 17.600 5.600 14 C2.400 12.600 .4 9 1 5.600Z" fill="url(#gbrown)"/><path d="M4 2.600 C7 .8 11 1 13 3.600 C10 3 7 4 5 6Z" fill="#f4e8d4" opacity=".85" filter="url(#b3)"/><path d="M10.400 4 C9 9 8.600 14 9.400 19.600" stroke="#fff" stroke-width="2" opacity=".8" fill="none" filter="url(#b5)"/><path d="M1.400 7.600 L6.400 8.600 L6.400 11.400 L3.400 11" stroke="#3c200c" stroke-width="1.300" fill="none"/><path d="M13.400 5.600 C13.600 10 12 14.600 10.400 19.600" stroke="#4a2a10" stroke-width="1.200" fill="none" opacity=".85"/><path d="M6 14 L8 15 M7 17.600 L9 18.400" stroke="#5a3414" stroke-width="1"/><path d="M16 4 L21.200 6.800" stroke="#48dce0" stroke-width="1.300" stroke-linecap="round"/></svg>
<div class="t" style="left:512px;top:206px;">: 17</div>
<div class="t" style="left:512px;top:218px;">: 43</div>
<div class="gb" style="left:559px;top:200px;width:149px;height:33px"></div><div class="gl" style="left:565px;top:195px;letter-spacing:-0.341px;word-spacing:1.2px;"><span>Capacitor (Lasts: 52s)</span></div>
<svg style="left:565px;top:208px;overflow:visible" width="20" height="23" viewBox="0 0 20 23" ><path d="M11.4 4 L5 16" stroke="#6c4018" stroke-width="7.4" stroke-linecap="round"/><path d="M10.4 3.8 L4.2 15.4" stroke="#a87c50" stroke-width="3.4" stroke-linecap="round"/><path d="M8.8 3.4 L2.8 14.8" stroke="#fcf8f2" stroke-width="1.9" stroke-linecap="round"/><path d="M13.8 6 L8 17.4" stroke="#2c1606" stroke-width="1.2" stroke-linecap="round"/><ellipse cx="12" cy="3" rx="3.6" ry="2.1" fill="#f0e8e0" stroke="#7a5434" stroke-width=".7" transform="rotate(25 12 3)"/><path d="M17 6.4 L11 13.4 L14 13.2 L9.4 21.8 L18.6 11.4 L15 11.6 L19 7Z" fill="#f8f0e4" stroke="#8a5c30" stroke-width=".8"/></svg>
<div class="t" style="left:591px;top:211px;">: 348</div>
<svg style="left:645px;top:208px;overflow:visible" width="23" height="22" viewBox="0 0 23 22" ><path d="M.6 12 L3.6 9.6 L15 19 L12 21.4Z" fill="#3c2c18"/><path d="M6 6.4 L15 12.4" stroke="#665a38" stroke-width="10.4" stroke-linecap="round"/><path d="M5 3.4 L14.6 9.2" stroke="#c8c09c" stroke-width="2.8" stroke-linecap="round" filter="url(#b5)"/><path d="M3.6 10.6 L12 16.4" stroke="#40341a" stroke-width="2" filter="url(#b5)"/><ellipse cx="16.4" cy="13" rx="3.8" ry="5.6" transform="rotate(-32 16.4 13)" fill="#343434" stroke="#94a4b4" stroke-width="1.1"/><ellipse cx="17" cy="13.4" rx="1.6" ry="2.6" transform="rotate(-32 17 13.4)" fill="#787c84"/></svg>
<div class="t" style="left:672px;top:206px;letter-spacing:-0.363px;">- 14</div>
<div class="t" style="left:672px;top:218px;letter-spacing:-0.429px;">+8.6</div>
<div class="gb" style="left:480px;top:243px;width:69px;height:56px"></div><div class="gl" style="left:486px;top:238px;letter-spacing:-0.433px;"><span>Firepower</span></div>
<svg style="left:483px;top:251px;overflow:visible" width="27" height="21" viewBox="0 0 27 21" ><ellipse cx="24" cy="11.4" rx="4.6" ry="2.6" fill="#606060" opacity=".45" filter="url(#b8)"/><path d="M2 8 L14 5.4" stroke="#2c343a" stroke-width="4.6" stroke-linecap="round"/><path d="M12 5 L23 3" stroke="#343c44" stroke-width="7.4" stroke-linecap="round"/><path d="M2 6.8 L13 4.2" stroke="#f4f6f8" stroke-width="2" stroke-linecap="round"/><path d="M12 3.2 L23 1.2" stroke="#e4e8ec" stroke-width="2.2" stroke-linecap="round"/><path d="M13 6 L23 4.2" stroke="#98a4ac" stroke-width="2.4"/><path d="M15 2.6 L16.4 7.6" stroke="#20262c" stroke-width="1.2"/><path d="M19 7 L17 16" stroke="#282c32" stroke-width="4.6"/><path d="M17.6 7.4 L16 15.4" stroke="#d0d8e0" stroke-width="1.4"/><path d="M10 16.8 L16 14 L22 16.8 L20 20.4 L13 20.8Z" fill="#5c4028"/><path d="M10.4 17 L16 14.8 L18.6 16.4 L12.6 19.2Z" fill="#a8d0e8"/><path d="M14 19.6 L19.6 17.4 L20 19.4 L15 20.4Z" fill="#c89c6c"/><path d="M10 16.8 L13 20.8 L20 20.4" stroke="#20140c" stroke-width="1" fill="none"/></svg>
<div class="t" style="left:512px;top:254px;">: 219</div>
<svg style="left:486px;top:276px;overflow:visible" width="24" height="19" viewBox="0 0 24 19" ><path d="M2.5999999999999996 4.4 L12.6 4.0" stroke="#38424a" stroke-width="1.6" opacity=".5" filter="url(#b5)"/><ellipse cx="14.6" cy="3.8000000000000003" rx="4.6" ry="2.1" fill="#1c242a" filter="url(#b3)"/><ellipse cx="14.2" cy="2.6" rx="3.8" ry="1.2" fill="#b8d8e4" filter="url(#b3)"/><path d="M6.800000000000001 10.200000000000001 L16.8 9.8" stroke="#38424a" stroke-width="1.6" opacity=".5" filter="url(#b5)"/><ellipse cx="18.8" cy="9.6" rx="4.6" ry="2.1" fill="#1c242a" filter="url(#b3)"/><ellipse cx="18.400000000000002" cy="8.4" rx="3.8" ry="1.2" fill="#b8d8e4" filter="url(#b3)"/><path d="M-1.5999999999999996 16.0 L8.4 15.6" stroke="#38424a" stroke-width="1.6" opacity=".5" filter="url(#b5)"/><ellipse cx="10.4" cy="15.399999999999999" rx="4.6" ry="2.1" fill="#1c242a" filter="url(#b3)"/><ellipse cx="10.0" cy="14.2" rx="3.8" ry="1.2" fill="#b8d8e4" filter="url(#b3)"/></svg>
<div class="t" style="left:512px;top:278px;">: 273</div>
<div class="gb" style="left:559px;top:243px;width:149px;height:56px"></div><div class="gl" style="left:565px;top:238px;letter-spacing:-0.083px;"><span>Targeting</span></div>
<svg style="left:563px;top:250px;overflow:visible" width="23" height="23" viewBox="0 0 23 23" ><circle cx="11.2" cy="11.9" r="10.7" fill="#98a8ac" opacity=".55" filter="url(#b5)"/><circle cx="10.8" cy="11.4" r="10.5" fill="#f4f8f8"/><circle cx="10.8" cy="11.4" r="8.8" fill="#dce4e4"/><circle cx="10.8" cy="11.4" r="8.8" fill="none" stroke="#c0cccc" stroke-width=".8"/><path d="M10.4 13 L10.4 2.6 A8.8 8.8 0 0 1 18.6 7.2Z" fill="#a8d8e0"/><path d="M10.4 13 L5 4.8 A8.8 8.8 0 0 1 10.4 2.6Z" fill="#c8e8ec"/><path d="M10.2 13.2 L19.4 3" stroke="#2c3c44" stroke-width="1.3"/><path d="M3 16 A9 9 0 0 0 17 18.6" stroke="#fff" stroke-width="1.1" fill="none" opacity=".9"/></svg>
<div class="t" style="left:591px;top:254px;letter-spacing:-0.152px;">: 25 km</div>
<svg style="left:651px;top:250px;overflow:visible" width="24" height="24" viewBox="0 0 24 24" ><circle cx="12.4" cy="12.6" r="9.2" fill="#6c6c6c" opacity=".4" filter="url(#b8)"/><circle cx="11.8" cy="12" r="8.4" fill="#c4c0b8"/><circle cx="11.8" cy="12" r="5" fill="none" stroke="#9c9890" stroke-width="1.2"/><circle cx="11.8" cy="12" r="2" fill="#c8c8c0"/><circle cx="11.8" cy="12" r="8.4" fill="none" stroke="#a47c54" stroke-width="1.8"/><path d="M5 6 A9 9 0 0 1 17 4.6" stroke="#ecdcc4" stroke-width="1.1" fill="none"/><path d="M11.8 .4 V23.6 M.2 12 H23.4" stroke="#94704c" stroke-width=".8"/></svg>
<div class="t" style="left:679px;top:254px;">: 4</div>
<svg style="left:564px;top:276px;overflow:visible" width="20" height="19" viewBox="0 0 20 19" ><path d="M7.4 1 C12 2 18 8 18.6 13.6 C16 16 12 16 9.6 14.6 L6.4 8.4Z" fill="#ece4d8" stroke="#8a6438" stroke-width=".8"/><path d="M7.4 1.4 L9.6 14 M7.4 1.4 L14 14.6 M7.4 1.4 L17.6 12" stroke="#9c7448" stroke-width=".8"/><path d="M13 13 C15 12 17 11 18.4 12.4 L18 14.6 C16 16 13 15.6 11.4 15Z" fill="#a88860" opacity=".8"/><path d="M8 9 L1 11.6 M6.6 10 L3.4 17.6 M6.6 10 L7.6 17 M3 14 L8 14.6" stroke="#6c4420" stroke-width="1.3" stroke-linecap="round"/><path d="M6.4 8.6 L8.4 13.6" stroke="#3c240c" stroke-width="1.6"/></svg>
<div class="t" style="left:591px;top:278px;letter-spacing:-0.294px;">: 1100 mm</div>
<svg style="left:654px;top:276px;overflow:visible" width="21" height="20" viewBox="0 0 21 20" ><circle cx="10.2" cy="9.6" r="9.2" fill="#dde0de" stroke="#7c848c" stroke-width=".9"/><circle cx="10.2" cy="9.6" r="7.6" fill="none" stroke="#fff" stroke-width="1"/><circle cx="10.2" cy="9.8" r="5.2" fill="#dce4e4" stroke="#54646c" stroke-width="1.7"/><circle cx="10.2" cy="9.8" r="2.2" fill="#c4d0d4" stroke="#34444c" stroke-width="1.3"/><path d="M5 7 A5.6 5.6 0 0 1 13 4.8" stroke="#a4c4d0" stroke-width="1" fill="none"/></svg>
<div class="t" style="left:679px;top:278px;">: 9</div>
<div class="gb" style="left:480px;top:310px;width:228px;height:32px"></div><div class="gl" style="left:486px;top:305px;letter-spacing:-0.411px;"><span>Mobility</span></div>
<svg style="left:486px;top:319px;overflow:visible" width="21" height="18" viewBox="0 0 21 18" ><path d="M8 5 L20.4 15.4 L8 15.6Z" fill="#34d4d4" filter="url(#b5)"/><path d="M1 6 L4 2 L9.6 1.4 L13 4.6 L11.6 11.6 L8 15 L4 14 L.8 10Z" fill="#f4f0ea" stroke="#94643a" stroke-width=".9"/><path d="M1 6.4 L4 2.2 L9 1.6" stroke="#7a4c24" stroke-width="1.8" fill="none"/><path d="M3 12.6 L7 14.6 L10 12.6" stroke="#6c4828" stroke-width="1.3" fill="none"/><path d="M8.4 5.6 L18 14 L8 14.4Z" fill="#40d8d8" filter="url(#b3)"/><path d="M8.6 7.6 L14 12.6 L8.4 12.8Z" fill="#d0fcfc" filter="url(#b3)"/></svg>
<div class="t" style="left:510px;top:320px;letter-spacing:0.014px;">: 3650 m/s</div>
<svg style="left:566px;top:314px;overflow:visible" width="27" height="26" viewBox="0 0 27 26" ><path d="M11.6 1.6 L12.4 5 M3.6 5.6 L6.4 8 M18 4.6 L17.4 6.4" stroke="#6c7c8c" stroke-width="1.4"/><circle cx="11.8" cy="12.4" r="7" fill="url(#galign)" stroke="#7c8c9c" stroke-width="1.1"/><path d="M11.8 12.6 V8.6" stroke="#1c3c5c" stroke-width="1.3"/><path d="M17 9 A7 7 0 0 1 16.6 17.6" stroke="#c4e4f8" stroke-width=".9" fill="none"/><g fill="#3c8cc4"><path d="M3.6 20 L5 20 L2 25 L.6 25Z" opacity=".45"/><path d="M7 20 L8.8 20 L6.2 25 L4.4 25Z" opacity=".7"/><path d="M10.6 20 L12.6 20 L10.6 25 L8.6 25Z"/><path d="M14.4 20 L16.6 20 L15.2 25 L13 25Z"/><path d="M18 20 L20 20 L19.4 25 L17.4 25Z"/><path d="M21 19.6 L26.4 22.4 L22 25.6Z"/></g></svg>
<div class="t" style="left:593px;top:320px;letter-spacing:-0.066px;">: 3.3 s</div>
<svg style="left:632px;top:316px;overflow:visible" width="21" height="23" viewBox="0 0 21 23" ><path d="M1.6 8 L5 2.4 L11 1.2 L13 6 L9 15.6 L3 13.6Z" fill="#5cd4d4" filter="url(#b3)"/><path d="M4 5 L8 15 M7.4 2.6 L10.6 12" stroke="#b8f4f4" stroke-width="1.1"/><path d="M2 9 L4 14 L9 16" stroke="#2c9ca4" stroke-width="1"/><ellipse cx="12.6" cy="12.6" rx="5" ry="6.4" transform="rotate(-20 12.6 12.6)" fill="#a4845c" stroke="#5c3c1c" stroke-width=".9"/><ellipse cx="12.8" cy="12.4" rx="3" ry="4.2" transform="rotate(-20 12.8 12.4)" fill="#ece4d8"/><ellipse cx="13.2" cy="12.8" rx="1.3" ry="2" transform="rotate(-20 13.2 12.8)" fill="#7c5c3c"/><path d="M14.6 10 L16.6 19.6 M9 19.6 L19 18.4" stroke="#8c6c4c" stroke-width="1.6" stroke-linecap="round"/><path d="M15.2 10.6 L17 19" stroke="#e8dccc" stroke-width=".7"/></svg>
<div class="t" style="left:655px;top:320px;letter-spacing:0.053px;">: 9 au/s</div>
<div class="t" style="left:479px;top:354px;letter-spacing:-0.398px;word-spacing:1.2px;">Signature: 81 m2</div>
<div class="t" style="left:599px;top:354px;letter-spacing:-0.427px;word-spacing:1.2px;">Cargohold: 125 m3</div>
<div class="t" style="left:479px;top:370px;letter-spacing:-0.329px;word-spacing:1.2px;">Dronebay: 10 / 10 m3</div>
<div class="t" style="left:479px;top:386px;letter-spacing:-0.399px;word-spacing:1.2px;">Price: 0 isk</div>
<div class="t" style="left:479px;top:402px;letter-spacing:-0.458px;word-spacing:1.2px;">Fleet Commander - right click to set</div>
<div class="t" style="left:479px;top:418px;letter-spacing:-0.417px;word-spacing:1.2px;">Wing Commander - right click to set</div>
<div class="t" style="left:479px;top:434px;letter-spacing:-0.438px;word-spacing:1.2px;">Squad Commander - right click to set</div>
</body></html>
